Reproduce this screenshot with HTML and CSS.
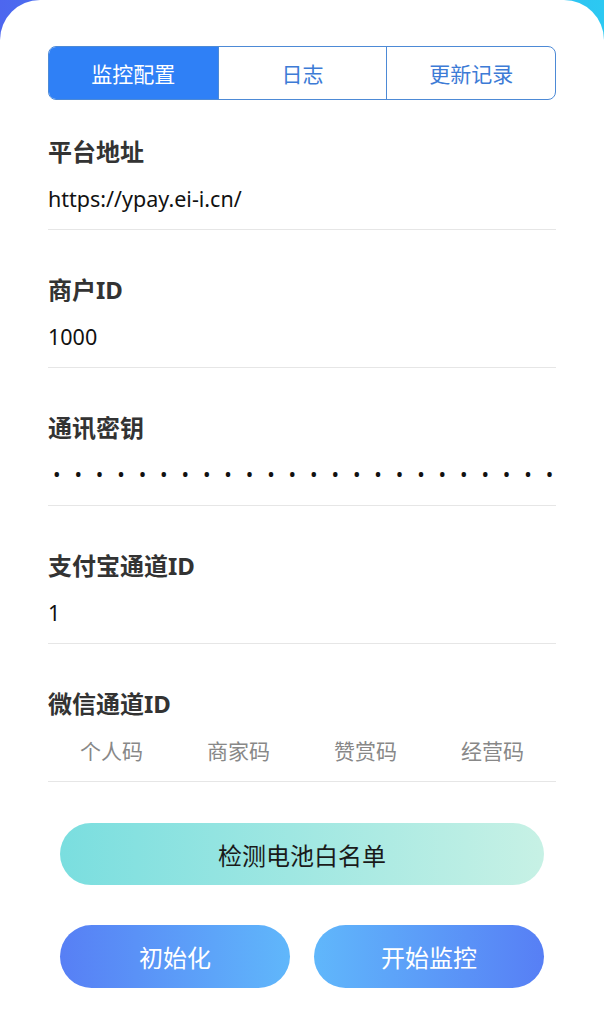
FILE: index.html
```html
<!DOCTYPE html>
<html lang="zh-CN">
<head>
    <meta charset="UTF-8">
    <meta name="viewport" content="width=device-width, initial-scale=1.0">
    <title>监控配置</title>
    <link rel="stylesheet" href="styles.css">
</head>
<body>

    <div class="card">
        <div class="tabs">
            <div class="tab active">监控配置</div>
            <div class="tab">日志</div>
            <div class="tab">更新记录</div>
        </div>

        <div class="field">
            <label>平台地址</label>
            <div class="value">https://ypay.ei-i.cn/</div>
        </div>

        <div class="field">
            <label>商户ID</label>
            <div class="value">1000</div>
        </div>

        <div class="field">
            <label>通讯密钥</label>
            <div class="value secret">••••••••••••••••••••••••</div>
        </div>

        <div class="field">
            <label>支付宝通道ID</label>
            <div class="value">1</div>
        </div>

        <div class="field">
            <label>微信通道ID</label>
            <div class="options">
                <span>个人码</span>
                <span>商家码</span>
                <span>赞赏码</span>
                <span>经营码</span>
            </div>
        </div>

        <button class="btn-check">检测电池白名单</button>

        <div class="btn-row">
            <button class="btn-init">初始化</button>
            <button class="btn-start">开始监控</button>
        </div>
    </div>

</body>
</html>
```

FILE: styles.css
```css
body {
    margin: 0;
    height: 1024px;
    overflow: hidden;
    background: linear-gradient(90deg, #4d66ef, #2cc9f2);
    font-family: "Noto Sans", "Noto Sans CJK SC", sans-serif;
}

.card {
    background: #fff;
    border-radius: 40px 40px 0 0;
    min-height: 1024px;
    padding: 46px 48px 0;
    box-sizing: border-box;
}

.tabs {
    display: grid;
    grid-template-columns: repeat(3, 1fr);
    height: 54px;
    border: 1px solid #4d8ad6;
    border-radius: 8px;
    overflow: hidden;
    box-sizing: border-box;
}

.tab {
    display: flex;
    align-items: center;
    justify-content: center;
    font-size: 21px;
    color: #3d7bd6;
    border-left: 1px solid #4d8ad6;
}

.tab:first-child {
    border-left: none;
}

.tab.active {
    background: #2f80f6;
    color: #fff;
}

.field {
    padding: 43px 0 13px;
    border-bottom: 1px solid #e6e6e6;
}

.tabs + .field {
    padding-top: 35px;
}

label {
    display: block;
    font-size: 24px;
    font-weight: bold;
    line-height: 34px;
    color: #333;
    margin-bottom: 13px;
}

.value {
    font-size: 21.5px;
    line-height: 34px;
    color: #111;
}

.secret {
    font-size: 20px;
    letter-spacing: 13.9px;
    padding-left: 5px;
    white-space: nowrap;
}

.options {
    display: grid;
    grid-template-columns: repeat(4, 1fr);
    text-align: center;
    font-size: 21px;
    line-height: 34px;
    color: #888;
}

button {
    display: block;
    border: none;
    font-family: inherit;
    font-size: 24px;
    border-radius: 32px;
    height: 62px;
    cursor: pointer;
}

.btn-check {
    width: 484px;
    margin: 41px auto 0;
    background: linear-gradient(90deg, #7adedf, #c7f1e5);
    color: #1a1a1a;
}

.btn-row {
    display: flex;
    justify-content: space-between;
    padding: 0 12px;
    margin-top: 40px;
}

.btn-row button {
    width: 230px;
    height: 63px;
    color: #fff;
}

.btn-init {
    background: linear-gradient(90deg, #577ff5, #60b7fb);
}

.btn-start {
    background: linear-gradient(90deg, #60b7fb, #577ff5);
}
```
